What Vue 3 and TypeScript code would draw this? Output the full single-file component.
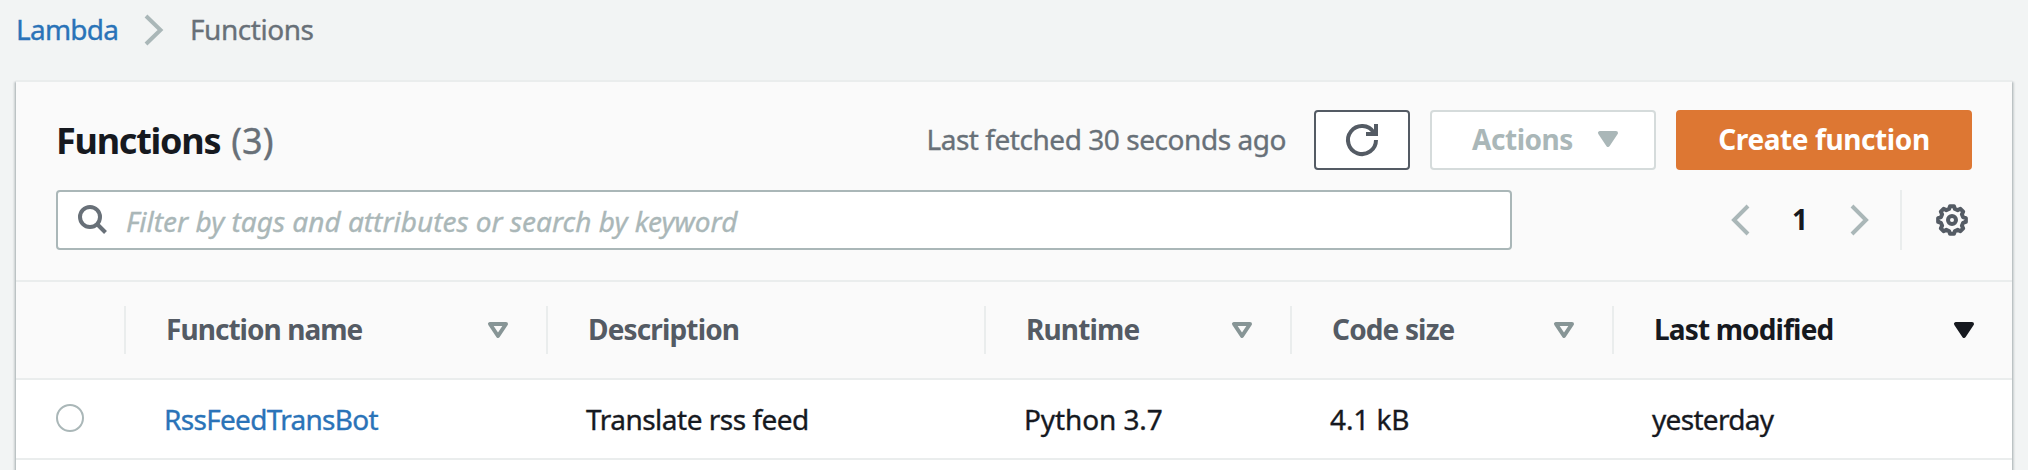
<script setup lang="ts">
interface Column {
  key: string
  label: string
  sort: 'none' | 'available' | 'active'
}

const columns: Column[] = [
  { key: 'name', label: 'Function name', sort: 'available' },
  { key: 'description', label: 'Description', sort: 'none' },
  { key: 'runtime', label: 'Runtime', sort: 'available' },
  { key: 'size', label: 'Code size', sort: 'available' },
  { key: 'modified', label: 'Last modified', sort: 'active' },
]

const rows: Record<string, string>[] = [
  {
    name: 'RssFeedTransBot',
    description: 'Translate rss feed',
    runtime: 'Python 3.7',
    size: '4.1 kB',
    modified: 'yesterday',
  },
]

// Outline of the eight-toothed settings gear, centred in a 32x32 box.
const gearPath = (() => {
  const points: string[] = []
  const corners: [number, number][] = [[-15, 11.4], [-8, 14], [8, 14], [15, 11.4]]
  for (let tooth = 0; tooth < 8; tooth++) {
    for (const [offset, radius] of corners) {
      const a = ((tooth * 45 + offset) * Math.PI) / 180
      points.push(`${(16 + radius * Math.cos(a)).toFixed(2)} ${(16 + radius * Math.sin(a)).toFixed(2)}`)
    }
  }
  return `M${points.join('L')}Z`
})()
</script>

<template>
  <main class="page">
    <nav class="breadcrumbs">
      <a class="crumb-link">Lambda</a>
      <svg class="crumb-chevron" width="20" height="32" viewBox="0 0 20 32"><path d="M2 2L16.5 16L2 30" /></svg>
      <span class="crumb-current">Functions</span>
    </nav>

    <section class="panel">
      <header class="toolbar">
        <h2 class="title">Functions</h2>
        <span class="count">(3)</span>
        <span class="fetched">Last fetched 30 seconds ago</span>
        <button class="button refresh" aria-label="Refresh">
          <svg class="icon" width="32" height="32" viewBox="0 0 32 32"><path d="M30 16A14 14 0 1 1 27.8 8.5M30 0V10H20" /></svg>
        </button>
        <button class="button actions" disabled>
          <span>Actions</span>
          <svg width="20" height="16" viewBox="0 0 20 16"><path class="solid" d="M2 2H18L10 14Z" /></svg>
        </button>
        <button class="button create">Create function</button>
      </header>

      <div class="filters">
        <div class="search">
          <svg class="search-icon" width="30" height="30" viewBox="0 0 30 30"><circle cx="12" cy="12" r="10" /><path d="M19 19L27.5 27.5" /></svg>
          <span class="placeholder">Filter by tags and attributes or search by keyword</span>
        </div>
        <div class="pager">
          <svg class="pager-arrow" width="20" height="32" viewBox="0 0 20 32"><path d="M18 2L4 16L18 30" /></svg>
          <b class="page-number">1</b>
          <svg class="pager-arrow" width="20" height="32" viewBox="0 0 20 32"><path d="M2 2L16 16L2 30" /></svg>
        </div>
        <div class="preferences">
          <svg class="icon" width="32" height="32" viewBox="0 0 32 32"><path class="gear" :d="gearPath" /><circle cx="16" cy="16" r="4" /></svg>
        </div>
      </div>

      <div class="row head">
        <div class="cell select"></div>
        <div v-for="column in columns" :key="column.key" class="cell" :class="column.sort">
          <span :class="`label-${column.key}`">{{ column.label }}</span>
          <svg v-if="column.sort !== 'none'" width="20" height="16" viewBox="0 0 20 16"><path d="M2 2H18L10 14Z" /></svg>
        </div>
      </div>

      <div v-for="row in rows" :key="row.name" class="row body">
        <div class="cell select"><span class="radio"></span></div>
        <div v-for="column in columns" :key="column.key" class="cell">
          <span :class="`value-${column.key}`">{{ row[column.key] }}</span>
        </div>
      </div>
    </section>
  </main>
</template>

<style>
body {
  background: #f2f3f3;
}
</style>

<style scoped>
.page {
  box-sizing: border-box;
  height: 470px;
  overflow: hidden;
  padding: 0 16px;
  background: #f2f4f4;
  color: #16191f;
  font: 400 28px/40px "Noto Sans", "Open Sans", sans-serif;
  white-space: nowrap;
}
svg {
  display: block;
  flex: none;
  overflow: visible;
  fill: none;
  stroke-width: 4;
}
.breadcrumbs,
.count,
.fetched,
.placeholder,
.body {
  -webkit-text-stroke: 0.35px currentColor;
}
.breadcrumbs {
  display: flex;
  align-items: center;
  height: 80px;
  box-sizing: border-box;
  padding-bottom: 22px;
  color: #687078;
}
.crumb-link {
  width: 128px;
  color: #2a73b8;
  letter-spacing: -0.75px;
}
.crumb-chevron {
  stroke: #aab7b8;
  margin-top: 2px;
}
.crumb-current {
  margin-left: 26px;
  letter-spacing: -0.45px;
}
.panel {
  height: 420px;
  border-top: 2px solid #eaeded;
  background: #fff;
  box-shadow: 0 2px 2px rgba(0, 28, 36, 0.3), 2px 2px 2px rgba(0, 28, 36, 0.15), -2px 2px 2px rgba(0, 28, 36, 0.15);
}
.toolbar {
  display: flex;
  align-items: center;
  box-sizing: border-box;
  height: 108px;
  padding: 8px 40px 0;
  background: #fafafa;
}
.title {
  margin: 1px 0 0;
  font-size: 36px;
  letter-spacing: -1.25px;
}
.count {
  margin: 1px 0 0 11px;
  font-size: 36px;
  color: #687078;
}
.fetched {
  margin: -2px 28px 0 auto;
  color: #687078;
  letter-spacing: -0.45px;
}
.button {
  display: flex;
  align-items: center;
  justify-content: center;
  box-sizing: border-box;
  height: 60px;
  padding: 0 0 2px;
  border: 2px solid #545b64;
  border-radius: 4px;
  background: #fff;
  font: inherit;
  font-weight: 700;
}
.refresh {
  width: 96px;
  padding: 0;
}
.icon {
  stroke: #545b64;
}
.actions {
  width: 226px;
  margin: 0 20px;
  padding-left: 4px;
  gap: 25px;
  border-color: #d5dbdb;
  color: #aab7b8;
  letter-spacing: -0.45px;
}
.solid {
  fill: #aab7b8;
  stroke: #aab7b8;
  stroke-linejoin: round;
}
.create {
  width: 296px;
  border-color: #dd7733;
  background: #dd7733;
  color: #fff;
  letter-spacing: -0.4px;
}
.filters {
  display: flex;
  box-sizing: border-box;
  height: 90px;
  padding: 0 40px 30px;
  background: #fafafa;
}
.search {
  display: flex;
  align-items: center;
  box-sizing: border-box;
  width: 1456px;
  padding-left: 20px;
  border: 2px solid #aab7b8;
  border-radius: 4px;
  background: #fff;
}
.search-icon {
  stroke: #687078;
}
.placeholder {
  margin: 1px 0 0 18px;
  color: #aab7b8;
  font-style: italic;
}
.pager {
  display: flex;
  align-items: center;
  margin-left: 218px;
}
.pager-arrow {
  stroke: #aab7b8;
}
.page-number {
  width: 100px;
  padding-bottom: 2px;
  text-align: center;
}
.preferences {
  display: flex;
  align-items: center;
  box-sizing: border-box;
  width: 72px;
  margin-left: auto;
  padding-left: 34px;
  border-left: 2px solid #eaeded;
}
.gear {
  stroke-linejoin: round;
}
.row {
  display: grid;
  grid-template-columns: 110px 422px 438px 306px 322px 398px;
  align-items: center;
  box-sizing: border-box;
  border-bottom: 2px solid #eaeded;
}
.head {
  height: 100px;
  border-top: 2px solid #eaeded;
  background: #fafafa;
  color: #545b64;
  font-weight: 700;
}
.head .cell {
  display: flex;
  align-items: center;
  justify-content: space-between;
  box-sizing: border-box;
  height: 48px;
  padding: 0 38px 0 40px;
  border-right: 2px solid #eaeded;
}
.head .cell span {
  margin-top: -2px;
}
.head .cell:last-child {
  border-right: 0;
}
.head path {
  stroke: #879596;
  stroke-linejoin: round;
}
.head .active {
  color: #16191f;
}
.head .active path {
  fill: #16191f;
  stroke: #16191f;
}
.body {
  height: 80px;
}
.body .cell {
  padding-left: 38px;
}
.body .select {
  padding-left: 40px;
}
.radio {
  display: block;
  box-sizing: border-box;
  width: 28px;
  height: 28px;
  margin-top: -2px;
  border: 2px solid #aab7b8;
  border-radius: 50%;
}
.label-name {
  letter-spacing: -0.95px;
}
.label-description,
.label-runtime,
.label-size {
  letter-spacing: -0.85px;
}
.label-modified {
  letter-spacing: -0.85px;
}
.value-name {
  color: #2a73b8;
  letter-spacing: -0.7px;
}
.value-description {
  letter-spacing: -0.5px;
}
.value-runtime,
.value-size {
  letter-spacing: -0.1px;
}
.value-modified {
  letter-spacing: -0.7px;
}
</style>
